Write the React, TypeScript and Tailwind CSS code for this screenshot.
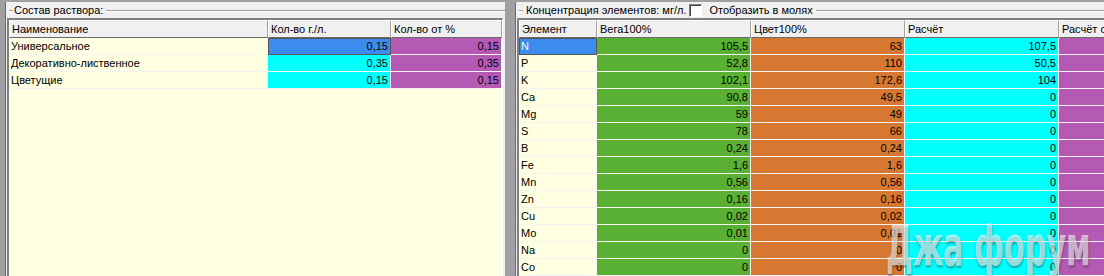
const mixes = [
  { name: "Универсальное", g: "0,15", p: "0,15", sel: true },
  { name: "Декоративно-лиственное", g: "0,35", p: "0,35" },
  { name: "Цветущие", g: "0,15", p: "0,15" },
];

const elements = [
  ["N", "105,5", "63", "107,5"],
  ["P", "52,8", "110", "50,5"],
  ["K", "102,1", "172,6", "104"],
  ["Ca", "90,8", "49,5", "0"],
  ["Mg", "59", "49", "0"],
  ["S", "78", "66", "0"],
  ["B", "0,24", "0,24", "0"],
  ["Fe", "1,6", "1,6", "0"],
  ["Mn", "0,56", "0,56", "0"],
  ["Zn", "0,16", "0,16", "0"],
  ["Cu", "0,02", "0,02", "0"],
  ["Mo", "0,01", "0,01", "0"],
  ["Na", "0", "0", "0"],
  ["Co", "0", "0", "0"],
];

function Head({ w, children }: { w: string; children?: React.ReactNode }) {
  return (
    <div
      className={`${w} shrink-0 h-[18px] bg-[#f0f0f0] border-t border-l border-t-white border-l-white border-r border-b border-r-[#a0a0a0] border-b-[#696969] pl-[2px] leading-[16px] whitespace-nowrap overflow-hidden`}
    >
      {children}
    </div>
  );
}

function Cell({ w, bg, right, sel, children }: { w: string; bg: string; right?: boolean; sel?: boolean; children?: React.ReactNode }) {
  return (
    <div
      className={`${w} ${bg} shrink-0 h-[17px] border-b border-r border-[#f4f4f4] leading-[16px] whitespace-nowrap overflow-hidden ${right ? "text-right pr-[2px]" : "pl-[2px]"} ${sel ? "outline outline-1 outline-[#555] -outline-offset-1" : ""}`}
    >
      {children}
    </div>
  );
}

function GroupTitle({ children }: { children: React.ReactNode }) {
  return (
    <div className="h-[16px] flex items-center pl-[3px]">
      <div className="w-[4px] h-[2px] border-t border-[#a0a0a0] border-b border-b-white mt-[1px]" />
      <div className="flex items-center gap-[3px] pl-[1px] pr-[3px] whitespace-nowrap">{children}</div>
      <div className="flex-1 h-[2px] border-t border-[#a0a0a0] border-b border-b-white mt-[1px]" />
    </div>
  );
}

export default function App() {
  return (
    <div
      className="relative w-[1104px] h-[276px] overflow-hidden bg-[#a0a0a4] pt-[2px] flex text-[11px] text-black"
      style={{ fontFamily: '"Liberation Sans", Arial, sans-serif' }}
    >
      {/* left group */}
      <div className="ml-[5px] w-[500px] shrink-0 bg-[#f0f0f0] border-l border-[#696969] flex flex-col">
        <GroupTitle>Состав раствора:</GroupTitle>
        <div className="ml-[1px] mr-[2px] flex-1 border-t-2 border-l-2 border-t-[#808080] border-l-[#808080] border-r border-r-white bg-[#ffffe1]">
          <div className="flex">
            <Head w="w-[259px]">Наименование</Head>
            <Head w="w-[123px]">Кол-во г./л.</Head>
            <Head w="w-[111px]">Кол-во от %</Head>
          </div>
          {mixes.map((m) => (
            <div key={m.name} className="flex">
              <Cell w="w-[259px]" bg="bg-[#ffffe1] border-[#eeeedd]">{m.name}</Cell>
              <Cell w="w-[123px]" bg={m.sel ? "bg-[#3c8cf0]" : "bg-[#00ffff]"} right sel={m.sel}>{m.g}</Cell>
              <Cell w="w-[111px]" bg="bg-[#b45ab4]" right>{m.p}</Cell>
            </div>
          ))}
        </div>
      </div>

      <div className="w-[10px] shrink-0" />

      {/* right group */}
      <div className="flex-1 bg-[#f0f0f0] border-l border-[#696969] flex flex-col min-w-0">
        <GroupTitle>
          <span className="ml-[2px]">Концентрация элементов: мг/л.</span>
          <span className="w-[13px] h-[13px] bg-white border border-t-[#808080] border-l-[#808080] border-r-white border-b-white shadow-[inset_1px_1px_0_#404040]" />
          <span className="ml-[4px]">Отобразить в молях</span>
        </GroupTitle>
        <div className="ml-[1px] flex-1 border-t-2 border-l-2 border-t-[#808080] border-l-[#808080] bg-[#ffffe1] overflow-hidden">
          <div className="flex">
            <Head w="w-[78px]">Элемент</Head>
            <Head w="w-[154px]">Вега100%</Head>
            <Head w="w-[154px]">Цвет100%</Head>
            <Head w="w-[154px]">Расчёт</Head>
            <Head w="w-[154px]">Расчёт от %</Head>
          </div>
          {elements.map((e, i) => (
            <div key={e[0]} className="flex">
              <Cell w="w-[78px]" bg={i === 0 ? "bg-[#3c8cf0] text-white" : "bg-[#ffffe1] border-[#eeeedd]"} sel={i === 0}>{e[0]}</Cell>
              <Cell w="w-[154px]" bg="bg-[#5ab032]" right>{e[1]}</Cell>
              <Cell w="w-[154px]" bg="bg-[#d77832]" right>{e[2]}</Cell>
              <Cell w="w-[154px]" bg="bg-[#00ffff]" right>{e[3]}</Cell>
              <Cell w="w-[154px]" bg="bg-[#b45ab4]" right />
            </div>
          ))}
        </div>
      </div>

      {/* forum watermark */}
      <div
        className="absolute left-[886px] top-[204px] origin-left scale-x-[0.54] text-[56px] font-bold text-white/60 whitespace-nowrap [text-shadow:1px_2px_3px_rgba(0,0,0,0.35)]"
        style={{ fontFamily: '"DejaVu Sans", sans-serif' }}
      >
        Джа форум
      </div>
    </div>
  );
}
